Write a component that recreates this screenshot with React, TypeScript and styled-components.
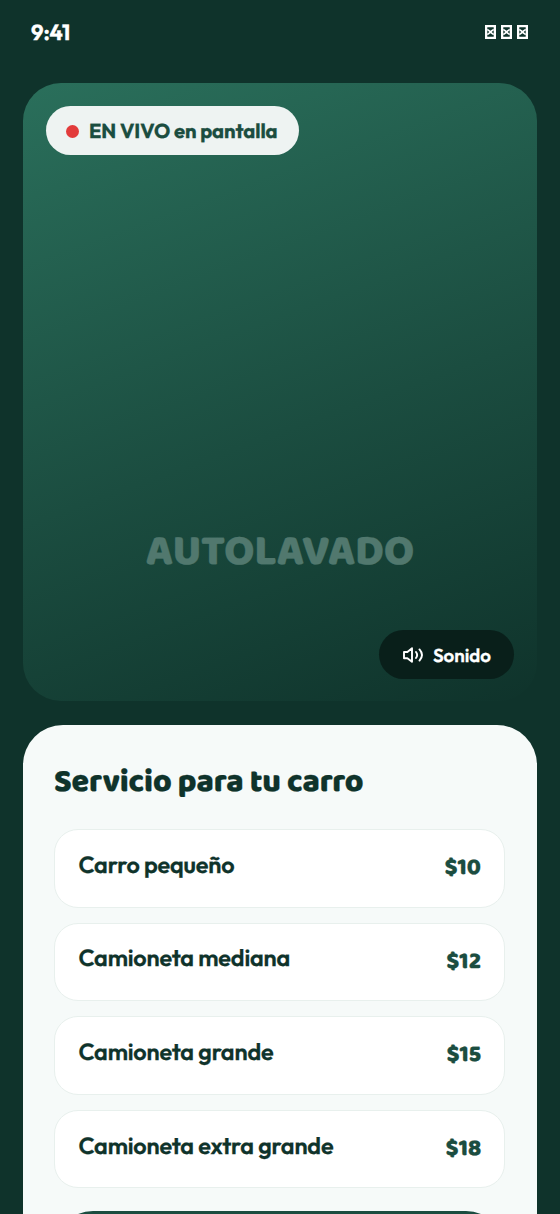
import React from "react";
import styled, { createGlobalStyle } from "styled-components";

const Global = createGlobalStyle`
  * { box-sizing: border-box; }
  html, body { margin: 0; background: #0f332b; }
  body {
    font-family: Outfit, Lato, sans-serif;
    color: #0f332b;
    text-rendering: geometricPrecision;
    -webkit-text-stroke: 0.25px currentColor;
  }
`;

const Screen = styled.div`
  height: 1214px;
  overflow: hidden;
  padding: 0 23px;
  background: #0f332b;
  display: flex;
  flex-direction: column;
`;

const StatusBar = styled.header`
  height: 83.4px;
  flex: none;
  padding: 17px 9px 0 8px;
  display: flex;
  justify-content: space-between;
  align-items: flex-start;
  color: #fff;
`;

const Time = styled.span`
  font-size: 21.8px;
  line-height: 30px;
  font-weight: 700;
  letter-spacing: -0.1px;
`;

const Indicators = styled.div`
  display: flex;
  gap: 5px;
  padding-top: 8px;
`;

const Video = styled.section`
  height: 617.6px;
  flex: none;
  border-radius: 38px;
  padding: 23px;
  background: linear-gradient(160deg, #2a6f5b 0%, #1b4d40 55%, #0f332b 100%);
  display: flex;
  flex-direction: column;
  align-items: flex-start;
`;

const LiveBadge = styled.div`
  height: 49px;
  width: 253px;
  border-radius: 25px;
  padding: 1px 0 0 20px;
  display: flex;
  align-items: center;
  gap: 10px;
  background: #eef3f2;
  color: #1b4d40;
  font-size: 20.2px;
  font-weight: 700;
  letter-spacing: -0.06px;
  white-space: nowrap;
`;

const Dot = styled.i`
  width: 13px;
  height: 13px;
  border-radius: 50%;
  background: #e23b3b;
`;

const Brand = styled.div`
  margin-top: auto;
  align-self: center;
  font-family: "Baloo 2", Lato, sans-serif;
  font-size: 43.5px;
  line-height: 50px;
  height: 50px;
  font-weight: 800;
  letter-spacing: -0.25px;
  color: #51786e;
`;

const SoundButton = styled.button`
  align-self: flex-end;
  margin: 53px 0 -1px;
  width: 135px;
  height: 49px;
  border: 0;
  border-radius: 25px;
  background: #091f1a;
  color: #fff;
  padding: 1px 0 0 23px;
  display: flex;
  align-items: center;
  gap: 9px;
  font: 600 18.7px Outfit, Lato, sans-serif;
  text-rendering: inherit;
`;

const Sheet = styled.main`
  flex: none;
  margin-top: 24px;
  height: 520px;
  border-radius: 40px 40px 0 0;
  padding: 36px 32px 0 31px;
  background: #f6faf9;
`;

const Title = styled.h1`
  margin: 0;
  height: 68px;
  font-family: "Baloo 2", Lato, sans-serif;
  font-size: 32px;
  line-height: 44px;
  font-weight: 800;
  letter-spacing: -0.16px;
  white-space: nowrap;
`;

const Services = styled.div`
  display: grid;
  gap: 15px;
`;

const Service = styled.button`
  height: 78.6px;
  border: 1px solid #e8f0ed;
  border-radius: 24px;
  background: #fff;
  padding: 0 23px 0 23.5px;
  display: flex;
  align-items: center;
  justify-content: space-between;
  color: #0f332b;
  text-rendering: inherit;
`;

const Name = styled.span`
  font: 600 23.4px/30px Outfit, Lato, sans-serif;
  letter-spacing: -0.18px;
  padding-bottom: 5px;
`;

const Price = styled.span`
  font: 800 23.4px/30px "Baloo 2", Lato, sans-serif;
  padding-top: 1.5px;
  color: #1b4d40;
`;

const Confirm = styled.div`
  margin-top: 23px;
  height: 78px;
  border-radius: 39px;
  background: #1b4d40;
`;

const services = [
  { name: "Carro pequeño", price: "$10" },
  { name: "Camioneta mediana", price: "$12" },
  { name: "Camioneta grande", price: "$15" },
  { name: "Camioneta extra grande", price: "$18" },
];

const BoxGlyph = () => (
  <svg width="11" height="14" viewBox="0 0 11 14">
    <path fill="#fff" d="M0 0h11v14H0z" />
    <path fill="#0f332b" d="M2.3 2.3h6.4v2H7.5L5.500 5.800 3.500 4.300H2.300zM2.300 11.700h6.400v-2H7.500L5.500 8.200l-2 1.500H2.300zM2.300 5.300L4.300 7l-2 1.700zM8.700 5.300L6.700 7l2 1.700z" />
  </svg>
);

const SpeakerIcon = () => (
  <svg width="22" height="20" viewBox="0 0 22 20" fill="none" stroke="#fff" strokeWidth="1.9" strokeLinecap="round" strokeLinejoin="round">
    <path d="M2 7h3.400L10 3.200v13.600l-4.600-3.600H2z" />
    <path d="M14 7q2.300 3 0 6M17.500 4.400q5 5.600 0 11.200" />
  </svg>
);

export default function App() {
  return (
    <>
      <Global />
      <Screen>
        <StatusBar>
          <Time>9:41</Time>
          <Indicators>
            <BoxGlyph />
            <BoxGlyph />
            <BoxGlyph />
          </Indicators>
        </StatusBar>
        <Video>
          <LiveBadge>
            <Dot />
            <span>EN VIVO en pantalla</span>
          </LiveBadge>
          <Brand>AUTOLAVADO</Brand>
          <SoundButton>
            <SpeakerIcon />
            <span>Sonido</span>
          </SoundButton>
        </Video>
        <Sheet>
          <Title>Servicio para tu carro</Title>
          <Services>
            {services.map((s) => (
              <Service key={s.name}>
                <Name>{s.name}</Name>
                <Price>{s.price}</Price>
              </Service>
            ))}
          </Services>
          <Confirm />
        </Sheet>
      </Screen>
    </>
  );
}
